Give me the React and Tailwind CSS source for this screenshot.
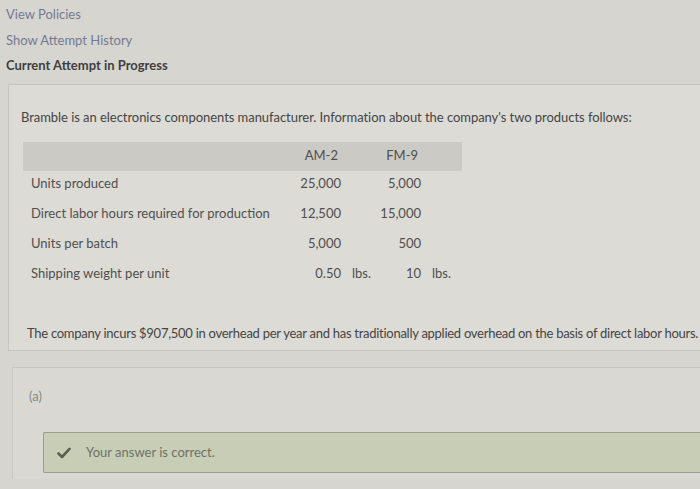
export default function App() {
  const rows = [
    { label: "Units produced", a: "25,000", b: "5,000", unit: false },
    { label: "Direct labor hours required for production", a: "12,500", b: "15,000", unit: false },
    { label: "Units per batch", a: "5,000", b: "500", unit: false },
    { label: "Shipping weight per unit", a: "0.50", b: "10", unit: true },
  ];
  return (
    <div
      className="w-[700px] h-[489px] overflow-hidden bg-[#d6d5cf] text-[#4f4f4f] text-[13px]"
      style={{ fontFamily: "Lato, 'Open Sans', sans-serif" }}
    >
      <div className="pl-[6px] pt-[4px] flex flex-col">
        <div className="h-[20px] leading-[20px] text-[#737b94]">View Policies</div>
        <div className="h-[20px] leading-[20px] mt-[6px] text-[#737b94]">Show Attempt History</div>
        <div className="h-[20px] leading-[20px] mt-[5px] font-bold text-[#3f3f3f]">Current Attempt in Progress</div>
      </div>

      <div className="ml-[8px] mt-[9px] h-[267px] border-t border-l border-b border-[#c6c5bf] bg-[#dcdbd5] overflow-hidden">
        <div className="pl-[12px] pt-[23px] whitespace-nowrap tracking-[-0.05px] text-[#454545]">
          Bramble is an electronics components manufacturer. Information about the company's two products follows:
        </div>

        <div className="ml-[14px] mt-[14px] w-[439px]">
          <div className="grid grid-cols-[268px_50px_30px_50px_41px] h-[29px] items-center bg-[#cbcac5]">
            <div />
            <div className="text-right pr-[3px]">AM-2</div>
            <div />
            <div className="text-right pr-[3px]">FM-9</div>
            <div />
          </div>
          <div className="flex flex-col mt-[-2px]">
            {rows.map((r, i) => (
              <div key={i} className="grid grid-cols-[268px_50px_30px_50px_41px] h-[30px] items-center">
                <div className="pl-[8px] whitespace-nowrap text-[#505050]">{r.label}</div>
                <div className="text-right">{r.a}</div>
                <div className="pl-[11px]">{r.unit ? "lbs." : ""}</div>
                <div className="text-right">{r.b}</div>
                <div className="pl-[11px]">{r.unit ? "lbs." : ""}</div>
              </div>
            ))}
          </div>
        </div>

        <div className="pl-[18px] mt-[35px] whitespace-nowrap tracking-[-0.27px] text-[#454545]">
          The company incurs $907,500 in overhead per year and has traditionally applied overhead on the basis of direct labor hours.
        </div>
      </div>

      <div className="ml-[12px] mt-[16px] h-[112px] border-t border-l border-[#c6c5bf] bg-[#d9d8d2] pt-[18px]">
        <div className="pl-[16px] text-[#8a8a8a] h-[20px] leading-[20px]">(a)</div>
        <div className="ml-[30px] mt-[26px] h-[41px] border border-r-0 border-[#98a088] rounded-l-[2px] bg-[#c8cdb6] flex items-center">
          <svg className="ml-[13px]" width="14" height="12" viewBox="0 0 14 12">
            <path d="M1.5 6.5 L5 10 L12.5 1.8" fill="none" stroke="#5a6052" strokeWidth="2.6" strokeLinecap="round" strokeLinejoin="round" />
          </svg>
          <span className="ml-[15px] text-[#6d7266]">Your answer is correct.</span>
        </div>
      </div>
    </div>
  );
}
